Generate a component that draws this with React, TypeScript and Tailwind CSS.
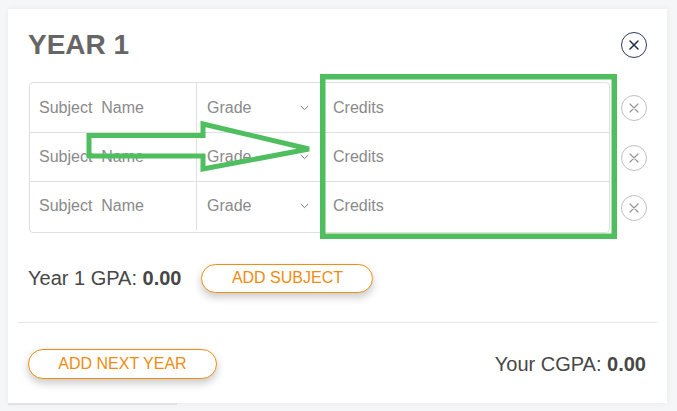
import React from "react";

const font = { fontFamily: '"Liberation Sans", Arial, sans-serif' };

function CloseCircle({ dark }: { dark?: boolean }) {
  return (
    <div
      className={
        "w-[26px] h-[26px] rounded-full border flex items-center justify-center bg-white " +
        (dark ? "border-[#2d3a5a]" : "border-[#c0c0c0]")
      }
    >
      <svg width="12" height="12" viewBox="0 0 12 12">
        <path
          d="M2 2 L10 10 M10 2 L2 10"
          stroke={dark ? "#1f2a48" : "#969696"}
          strokeWidth={dark ? 1.5 : 1.2}
          strokeLinecap="round"
        />
      </svg>
    </div>
  );
}

function Row({ first }: { first?: boolean }) {
  return (
    <div className={"flex h-[49px] " + (first ? "" : "border-t border-[#e0e0e0]")}>
      <div className="w-[167px] flex items-center pl-[9px] border-r border-[#e0e0e0] text-[16px] text-[#8a8a8a]">
        Subject{"\u00a0 "}Name
      </div>
      <div className="w-[125px] flex items-center justify-between pl-[10px] pr-[12px] border-r border-[#e0e0e0] text-[16px] text-[#8a8a8a]">
        <span>Grade</span>
        <svg width="9" height="6" viewBox="0 0 9 6">
          <path d="M0.8 1 L4.5 4.6 L8.2 1" stroke="#7a7a7a" strokeWidth="1" fill="none" />
        </svg>
      </div>
      <div className="flex-1 flex items-center pl-[11px] text-[16px] text-[#8a8a8a]">Credits</div>
    </div>
  );
}

export default function App() {
  return (
    <div className="relative w-[677px] h-[411px] bg-[#f5f6f8] overflow-hidden" style={font}>
      <div className="pt-[9px] pl-[8px] w-[667px]">
        <div className="bg-white w-[659px] shadow-[0_0_6px_rgba(0,0,0,0.06)]">
          <div className="px-[20px] pt-[22px]">
            <div className="flex items-center justify-between h-[28px]">
              <div className="text-[28px] leading-[28px] font-bold text-[#666666]">YEAR 1</div>
              <CloseCircle dark />
            </div>
            <div className="flex mt-[23px] gap-[11px]">
              <div className="flex-1 ml-px border border-[#e0e0e0] rounded-[4px]">
                <Row first />
                <Row />
                <Row />
              </div>
              <div className="flex flex-col pt-px">
                <div className="h-[50px] flex items-center">
                  <CloseCircle />
                </div>
                <div className="h-[50px] flex items-center">
                  <CloseCircle />
                </div>
                <div className="h-[50px] flex items-center">
                  <CloseCircle />
                </div>
              </div>
            </div>
            <div className="flex items-center mt-[30px] pb-[29px]">
              <div className="text-[20px] text-[#474747]">
                Year 1 GPA: <span className="font-bold">0.00</span>
              </div>
              <button className="ml-[20px] w-[172px] h-[29px] rounded-full border border-[#ef8f12] bg-white text-[16px] text-[#ef8c0e] shadow-[0_4px_8px_rgba(0,0,0,0.22)]">
                ADD SUBJECT
              </button>
            </div>
          </div>
          <div className="mx-[10px] border-t border-[#e6e6e6]"></div>
          <div className="flex items-center justify-between px-[20px] pt-[26px] pb-[24px]">
            <button className="w-[189px] h-[30px] rounded-full border border-[#ef8f12] bg-white text-[16px] text-[#ef8c0e] shadow-[0_4px_8px_rgba(0,0,0,0.22)]">
              ADD NEXT YEAR
            </button>
            <div className="text-[20px] text-[#474747] pr-px">
              Your CGPA: <span className="font-bold">0.00</span>
            </div>
          </div>
        </div>
        <div className="w-[169px] h-[2px] bg-[#e2e2e2]"></div>
      </div>
      <svg className="absolute left-0 top-0 pointer-events-none" width="677" height="411" viewBox="0 0 677 411">
        <rect x="322.75" y="76.75" width="291.5" height="159.5" fill="none" stroke="#4fbe5e" strokeWidth="5.5" />
        <polygon
          points="89,135.5 203,135.5 203,124 309,149 203,169 203,156 89,156"
          fill="none"
          stroke="#4fbe5e"
          strokeWidth="5"
          strokeLinejoin="miter"
        />
      </svg>
    </div>
  );
}
